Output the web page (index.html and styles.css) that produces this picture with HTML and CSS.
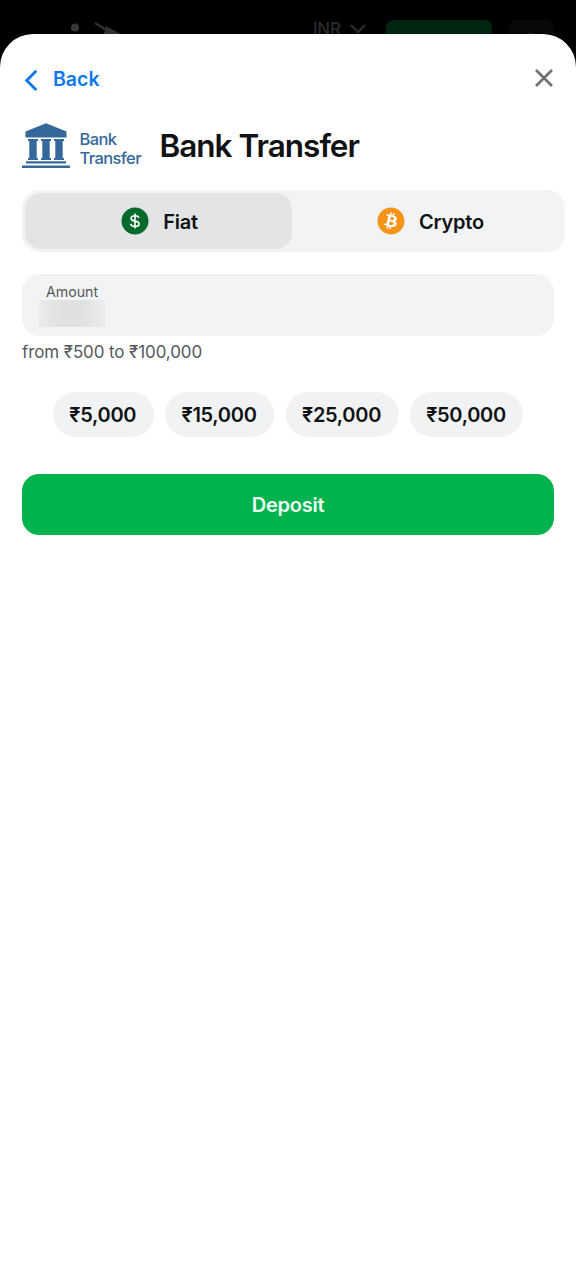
FILE: index.html
```html
<!DOCTYPE html>
<html lang="en">
<head>
<meta charset="utf-8">
<meta name="viewport" content="width=device-width, initial-scale=1">
<title>Bank Transfer</title>
<link rel="stylesheet" href="styles.css">
</head>
<body>
<header class="topbar">
  <svg class="topbar-logo" width="60" height="34" viewBox="0 0 60 34"><circle cx="15" cy="27.5" r="4" fill="#383838"/><path d="M35 23l13 8" stroke="#303030" stroke-width="2.6"/><path d="M46 26l15 8H44z" fill="#303030"/></svg>
  <span class="topbar-currency">INR</span>
  <svg class="topbar-chevron" width="18" height="12" viewBox="0 0 18 12"><path d="M2 2l7 7 7-7" fill="none" stroke="#2b2c2f" stroke-width="2.4"/></svg>
  <div class="topbar-deposit"></div>
  <div class="topbar-profile"><svg width="12" height="12" viewBox="0 0 12 12"><circle cx="6" cy="6" r="4" fill="#252525"/></svg></div>
</header>
<main class="sheet">
  <nav class="sheet-nav">
    <button class="back">
      <svg width="18" height="24" viewBox="0 0 18 24"><path d="M14.3 2.700L4.700 12.500l9.600 9.500" fill="none" stroke="#0c78ea" stroke-width="2.800"/></svg>
      <span>Back</span>
    </button>
    <button class="close" aria-label="Close"><svg width="20" height="20" viewBox="0 0 20 20"><path d="M2 2l16 16M18 2L2 18" stroke="#6e717d" stroke-width="2.7"/></svg></button>
  </nav>
  <div class="heading">
    <svg class="bank" width="48" height="46" viewBox="0 0 48 46" fill="#34689a">
      <path d="M24 .2L44.500 8.500v6H3.500v-6z"/>
      <path d="M6 16h10v2h-1.300v17H16v2H6v-2h1.300V18H6zM19 16h10v2h-1.300v17H29v2H19v-2h1.300V18H19zM32 16h10v2h-1.300v17H42v2H32v-2h1.300V18H32z"/>
      <path d="M4 38.300h40v2.200H4zM0 42.500h48v2.400H0z"/>
    </svg>
    <span class="bank-name">Bank<br>Transfer</span>
    <h1>Bank Transfer</h1>
  </div>
  <div class="tabs">
    <button class="tab tab-active">
      <svg width="28" height="28" viewBox="0 0 28 28"><circle cx="14" cy="14" r="13.500" fill="#066a2c"/><path d="M18 10.700C17.400 9.300 16 8.700 14 8.700c-2.300 0-3.900 1-3.900 2.700 0 3.900 8 1.500 8 5.400 0 1.700-1.700 2.700-4.100 2.700-2.200 0-3.900-.9-4.300-2.600M14 6.500v15" fill="none" stroke="#fff" stroke-width="1.600"/></svg>
      <span>Fiat</span>
    </button>
    <button class="tab tab-crypto">
      <svg width="28" height="28" viewBox="-.45 -.45 24.900 24.900"><circle cx="12" cy="12" r="9" fill="#fff"/><path fill="#f69319" d="M23.638 14.904c-1.602 6.430-8.113 10.340-14.542 8.736C2.670 22.050-1.244 15.525.362 9.105 1.962 2.670 8.475-1.243 14.900.358c6.430 1.605 10.342 8.115 8.738 14.548v-.002zm-6.350-4.613c.24-1.590-.974-2.450-2.640-3.030l.54-2.153-1.315-.33-.525 2.107c-.345-.087-.705-.167-1.064-.25l.526-2.127-1.320-.33-.54 2.165c-.285-.067-.565-.132-.84-.2l-1.815-.45-.35 1.407s.975.225.955.236c.535.136.63.486.615.766l-1.477 5.920c-.075.166-.24.406-.614.314.015.02-.96-.24-.96-.24l-.66 1.510 1.710.426.93.242-.54 2.190 1.320.327.54-2.170c.36.1.705.19 1.050.273l-.51 2.154 1.320.33.545-2.190c2.240.427 3.930.257 4.640-1.774.57-1.637-.03-2.580-1.217-3.196.854-.193 1.500-.76 1.680-1.930h.01zm-3.010 4.220c-.404 1.640-3.157.75-4.050.53l.72-2.900c.896.23 3.757.67 3.330 2.370zm.41-4.240c-.37 1.490-2.662.735-3.405.55l.654-2.640c.744.18 3.137.524 2.750 2.084v.006z"/></svg>
      <span>Crypto</span>
    </button>
  </div>
  <div class="amount">
    <span class="amount-label">Amount</span>
    <div class="amount-value"></div>
  </div>
  <p class="limits">from ₹500 to ₹100,000</p>
  <div class="presets">
    <button class="preset preset-small">₹5,000</button>
    <button class="preset preset-medium">₹15,000</button>
    <button class="preset">₹25,000</button>
    <button class="preset">₹50,000</button>
  </div>
  <button class="deposit">Deposit</button>
</main>
</body>
</html>
```

FILE: styles.css
```css
* { box-sizing: border-box; }

body {
  margin: 0;
  min-height: 1280px;
  display: flex;
  flex-direction: column;
  background: #000;
  color: #111214;
  font-family: Inter, "Liberation Sans", sans-serif;
}

button {
  margin: 0;
  padding: 0;
  border: 0;
  background: none;
  color: inherit;
  font: inherit;
}

svg { display: block; flex: none; }

.topbar {
  height: 33.500px;
  overflow: hidden;
  display: flex;
  align-items: flex-start;
  padding-left: 60px;
}

.topbar-currency {
  margin: 18px 0 0 193px;
  width: 28px;
  color: #2b2c2f;
  font-size: 17px;
  line-height: 22px;
  font-weight: 500;
  letter-spacing: -.3px;
}

.topbar-chevron { margin: 23px 0 0 8px; }

.topbar-deposit {
  margin: 20px 0 0 19px;
  width: 106px;
  height: 40px;
  border-radius: 8px;
  background: #002510;
}

.topbar-profile {
  margin: 20px 0 0 17px;
  width: 44px;
  height: 40px;
  border-radius: 6px;
  background: #080808;
  padding: 11px 0 0 16px;
}

.sheet {
  flex: 1;
  padding: 26.500px 22px 0;
  border-radius: 33px 33px 0 0;
  background: #fff;
}

.sheet-nav {
  display: flex;
  justify-content: space-between;
  align-items: center;
  height: 36px;
}

.back {
  display: flex;
  align-items: center;
  gap: 13px;
  color: #0c78ea;
  font-size: 19.500px;
  font-weight: 600;
  letter-spacing: 0;
}

.back svg { margin-top: 3px; }
.back span { padding-top: 2px; }

.heading {
  display: flex;
  height: 94px;
  align-items: center;
}

.bank { margin-top: 5px; }

.bank-name {
  width: 62px;
  margin: 12px 0 0 9.500px;
  color: #34689a;
  font-size: 16.500px;
  line-height: 19.500px;
  font-weight: 500;
  letter-spacing: -.6px;
}

h1 {
  margin: 6px 0 0 18px;
  font-size: 31.500px;
  line-height: 40px;
  font-weight: 600;
  letter-spacing: -1px;
  white-space: nowrap;
}

.tabs {
  display: flex;
  width: 543px;
  height: 62px;
  padding: 3px;
  border-radius: 18px;
  background: #f1f3f4;
}

.tab {
  width: 267px;
  display: flex;
  align-items: center;
  justify-content: center;
  gap: 14px;
  border-radius: 16px;
  font-size: 20px;
  font-weight: 600;
  letter-spacing: -.25px;
}

.tab span { padding-top: 1px; }

.tab-active {
  padding-left: 2px;
  background: #e2e4e6;
}

.tab-crypto { padding-left: 10px; }

.amount {
  height: 62px;
  margin-top: 22px;
  padding: 9px 17px 0;
  border-radius: 18px;
  background: #f1f3f4;
}

.amount-label {
  display: block;
  padding-left: 7px;
  color: #57595d;
  font-size: 14.200px;
  line-height: 17px;
}

.amount-value {
  width: 66px;
  height: 27px;
  background: linear-gradient(90deg, #eaebec, #dfe0e1 35%, #e0e1e2 70%, #ecedee);
}

.limits {
  margin: 5px 0 0;
  color: #57595d;
  font-size: 17px;
  line-height: 22px;
  letter-spacing: -.1px;
}

.presets {
  display: flex;
  justify-content: center;
  gap: 11.500px;
  margin-top: 29px;
}

.preset {
  width: 113px;
  height: 44.500px;
  padding: 1px 1px 0 0;
  border-radius: 23px;
  background: #f1f2f3;
  font-size: 20px;
  font-weight: 600;
  letter-spacing: -.3px;
}

.preset-small { width: 100.500px; }
.preset-medium { width: 109px; }

.deposit {
  display: block;
  width: 100%;
  height: 61.500px;
  margin-top: 37px;
  padding-top: 1px;
  border-radius: 17px;
  background: #00b34c;
  color: #effff5;
  font-size: 20px;
  font-weight: 600;
  letter-spacing: -.25px;
}
```
